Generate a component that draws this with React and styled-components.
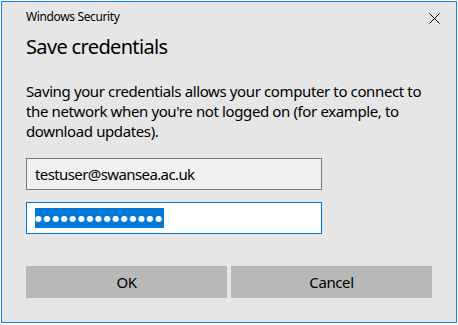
import React from "react";
import styled, { createGlobalStyle } from "styled-components";

const Global = createGlobalStyle`
  html, body { margin: 0; padding: 0; background: #ffffff; }
  body { padding: 1px; font-family: "Noto Sans", "Open Sans", sans-serif; color: #000; }
`;

const Window = styled.div`
  width: 456px;
  height: 322px;
  box-sizing: border-box;
  border: 1px solid #1883d7;
  background: #e6e6e6;
  display: flex;
  flex-direction: column;
`;

const TitleBar = styled.div`
  height: 31px;
  box-sizing: border-box;
  padding: 7px 16px 0 24px;
  display: flex;
  justify-content: space-between;
  align-items: flex-start;
`;

const TitleText = styled.span`
  font-size: 12px;
  line-height: 16px;
  letter-spacing: -0.37px;
  color: #000;
`;

const CloseButton = styled.span`
  display: flex;
  width: 11px;
  height: 11px;
  margin-top: 4px;
`;

const Body = styled.div`
  padding: 0 24px;
  display: flex;
  flex-direction: column;
`;

const Heading = styled.h1`
  margin: 0;
  font-size: 20px;
  line-height: 28px;
  font-weight: 400;
  letter-spacing: -0.65px;
  color: #000;
`;

const Message = styled.p`
  margin: 20px 0 0;
  font-size: 15px;
  line-height: 20px;
  letter-spacing: -0.38px;
  white-space: nowrap;
  color: #000;
`;

const Field = styled.div`
  width: 296px;
  height: 32px;
  box-sizing: border-box;
  margin-top: ${(p) => p.$gap}px;
  padding: 0 8px;
  display: flex;
  align-items: center;
  font-size: 15px;
  letter-spacing: -0.6px;
  border: 1px solid ${(p) => (p.$focused ? "#0078d7" : "#7a7a7a")};
  background: ${(p) => (p.$focused ? "#ffffff" : "#f0f0f0")};
`;

const Selection = styled.span`
  display: inline-flex;
  align-items: center;
  height: 20px;
  background: #0078d7;
  color: #ffffff;
  font-size: 8px;
  letter-spacing: 1.6px;
  font-family: "DejaVu Sans", sans-serif;
  white-space: nowrap;
`;

const Buttons = styled.div`
  margin-top: 32px;
  display: flex;
  gap: 4px;
`;

const Button = styled.button`
  width: 201px;
  height: 32px;
  border: none;
  padding: 0;
  background: #b8b8b8;
  font-family: inherit;
  font-size: 15px;
  letter-spacing: -0.4px;
  color: #000;
`;

export default function App() {
  return (
    <>
      <Global />
      <Window>
        <TitleBar>
          <TitleText>Windows Security</TitleText>
          <CloseButton>
            <svg width="11" height="11" viewBox="0 0 11 11">
              <path d="M0.5 0.5 L10.5 10.5 M10.5 0.5 L0.5 10.5" stroke="#000" strokeWidth="1" fill="none" />
            </svg>
          </CloseButton>
        </TitleBar>
        <Body>
          <Heading>Save credentials</Heading>
          <Message>
            Saving your credentials allows your computer to connect to
            <br />
            the network when you're not logged on (for example, to
            <br />
            download updates).
          </Message>
          <Field $gap={17}>testuser@swansea.ac.uk</Field>
          <Field $gap={12} $focused>
            <Selection>●●●●●●●●●●●●●●●</Selection>
          </Field>
          <Buttons>
            <Button>OK</Button>
            <Button>Cancel</Button>
          </Buttons>
        </Body>
      </Window>
    </>
  );
}
